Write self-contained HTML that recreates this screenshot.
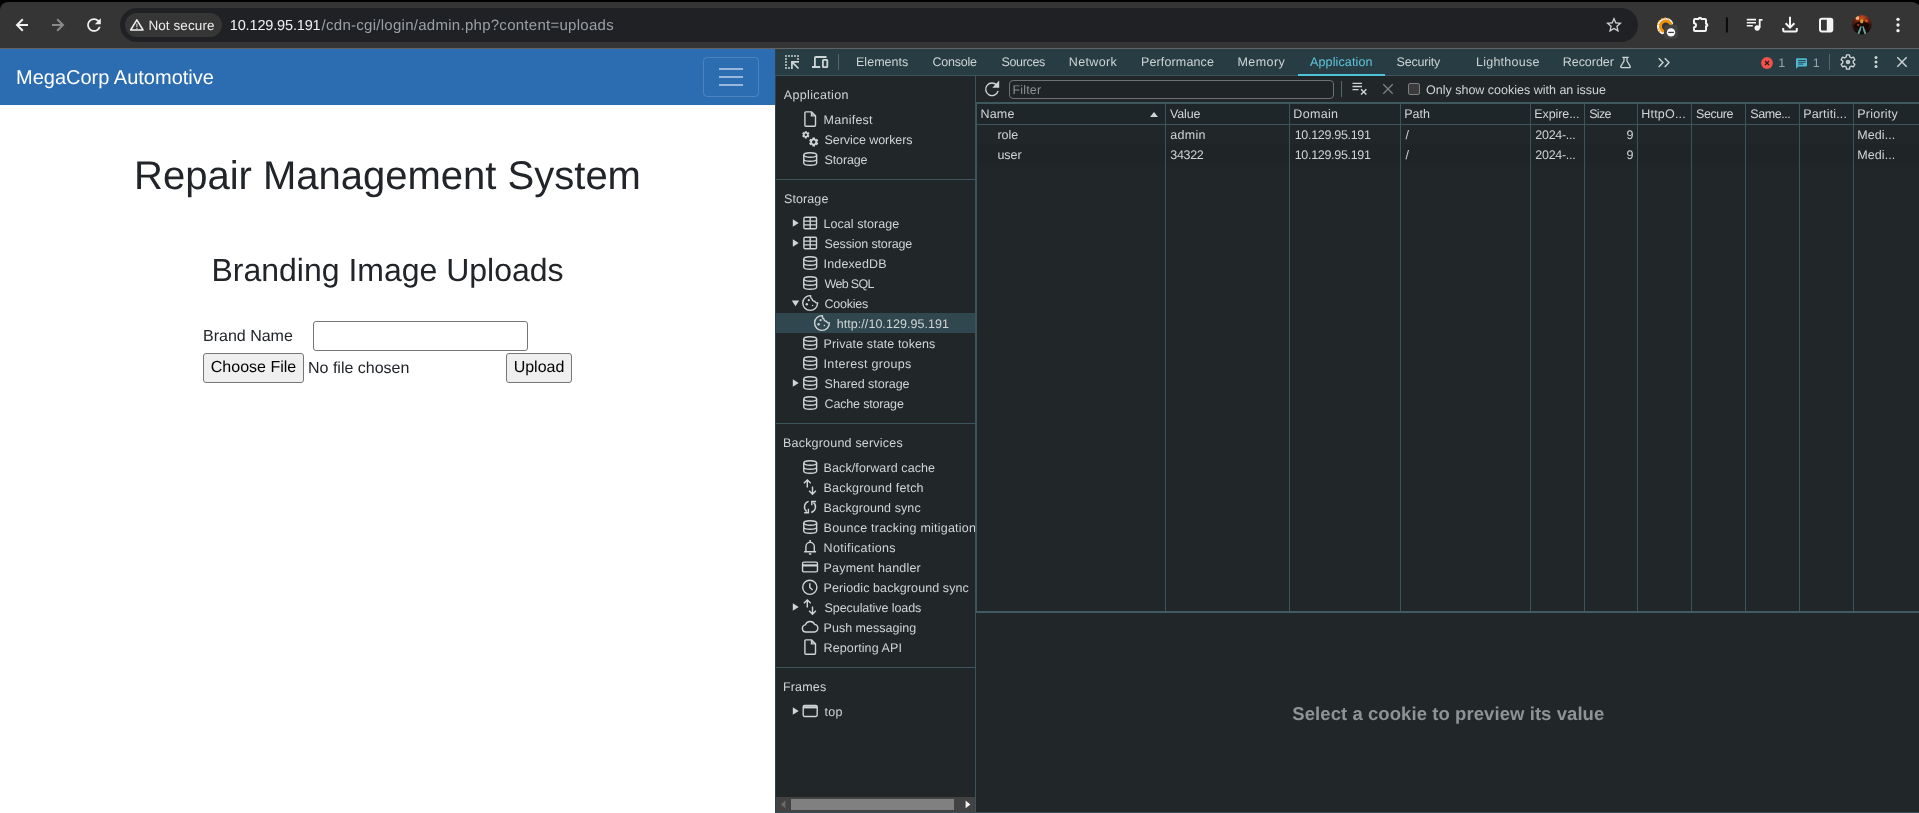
<!DOCTYPE html>
<html lang="en">
<head>
<meta charset="utf-8">
<title>Admin</title>
<style>
*{box-sizing:border-box;margin:0;padding:0}
html,body{width:1919px;height:813px;overflow:hidden;background:#fff}
body{position:relative;font-family:"Liberation Sans",sans-serif;text-rendering:geometricPrecision;-webkit-font-smoothing:antialiased}
.abs{position:absolute}
svg{position:absolute;overflow:visible}
/* ---------- browser chrome ---------- */
#chrome{will-change:transform;position:absolute;left:0;top:0;width:1919px;height:49px;background:#000;overflow:hidden}
#tb{position:absolute;left:0;top:2px;width:1920.500px;height:46px;background:#353535;border-radius:8px 9px 0 0}
#tbline{position:absolute;left:0;top:48px;width:1919px;height:1px;background:#636363}
#omni{position:absolute;left:120px;top:8px;width:1518px;height:34px;border-radius:17px;background:#202124}
#chip{position:absolute;left:125px;top:13px;width:97px;height:24px;border-radius:12px;background:#363636}
.ct{position:absolute;height:20px;line-height:20px;white-space:pre;color:#ececec}
/* ---------- page ---------- */
#page{will-change:transform;position:absolute;left:0;top:49px;width:775px;height:764px;background:#fff;color:#212529;overflow:hidden}
#nav{position:absolute;left:0;top:0;width:775px;height:56px;background:#2c6cb0}
#brand{position:absolute;left:16px;top:1px;height:56px;line-height:56px;font-size:20px;color:#fff;white-space:pre}
#tog{position:absolute;left:703px;top:8px;width:56px;height:40px;border:1px solid rgba(255,255,255,.16);border-radius:4px}
#tog i{position:absolute;left:15px;width:24px;height:2px;background:rgba(255,255,255,.52)}
h1,h2{position:absolute;left:0;width:775px;text-align:center;font-weight:400;white-space:pre}
h1{font-size:40px;line-height:48px;top:103px}
h2{font-size:32px;line-height:38px;top:201.5px}
.f16{font-size:16px;line-height:24px;white-space:pre;position:absolute}
.btn{position:absolute;height:30px;background:#efefef;border:1px solid #767676;border-radius:3px;color:#000;font-size:16px;line-height:27px;text-align:center;white-space:pre}
/* ---------- devtools ---------- */
#dt{will-change:transform;position:absolute;left:775px;top:49px;width:1144px;height:764px;background:#212629;color:#d0d4d6;font-size:12.5px;overflow:hidden}
#dt .ln{position:absolute;background:#3c555d}
#tabs{position:absolute;left:0;top:0;width:1144px;height:26px;background:#273d43}
.t{position:absolute;white-space:pre;line-height:20px;height:20px;color:#d0d4d6}
#tabs .t{top:3px;color:#c9ced0}
</style>
</head>
<body>
<div id="chrome">
 <div id="tb"></div><div id="tbline"></div>
 <div id="omni"></div><div id="chip"></div>
<div class="ct" style="left:148.40px;top:16.42px;font-size:13.5px;letter-spacing:0.092px;color:#ececec">Not secure</div>
<div class="ct" style="left:229.80px;top:15.78px;font-size:14.5px;letter-spacing:-0.155px;color:#f1f1f1">10.129.95.191</div>
<div class="ct" style="left:321.60px;top:15.60px;font-size:15px;letter-spacing:0.273px;color:#9aa0a6">/cdn-cgi/login/admin.php?content=uploads</div>
 <svg width="1919" height="48" viewBox="0 0 1919 48" style="left:0;top:0">
  <!-- back -->
  <path d="M28 25H17.6M22.8 19.2L17 25l5.8 5.8" fill="none" stroke="#f1f1f1" stroke-width="2"/>
  <!-- forward -->
  <path d="M52 25h10.4M57.2 19.2L63 25l-5.8 5.8" fill="none" stroke="#8a8a8a" stroke-width="2"/>
  <!-- reload -->
  <g transform="translate(83.8 14.8) scale(.85)" fill="#f1f1f1"><path d="M17.65 6.35C16.2 4.9 14.21 4 12 4c-4.42 0-7.99 3.58-7.99 8s3.57 8 7.99 8c3.73 0 6.84-2.55 7.73-6h-2.08c-.82 2.33-3.04 4-5.65 4-3.31 0-6-2.69-6-6s2.69-6 6-6c1.66 0 3.14.69 4.22 1.78L13 11h7V4l-2.35 2.35z"/></g>
  <!-- warning -->
  <path d="M136.850 19.900l6.200 10.100h-12.400z" fill="none" stroke="#f1f1f1" stroke-width="1.500" stroke-linejoin="round"/>
  <path d="M136.850 23.600v3.400M136.850 27.800v1.200" stroke="#b9b9b9" stroke-width="1.300"/>
  <!-- star -->
  <g transform="translate(1604.400 15.400) scale(.8)" fill="#d2d2d2"><path d="M22 9.24l-7.19-.62L12 2 9.19 8.63 2 9.24l5.46 4.73L5.82 21 12 17.27 18.18 21l-1.63-7.03L22 9.24zM12 15.4l-3.76 2.27 1-4.28-3.32-2.88 4.38-.38L12 6.1l1.71 4.04 4.38.38-3.32 2.88 1 4.28L12 15.4z"/></g>
  <!-- extension swirl -->
  <g fill="none">
   <path d="M1671.200 23.200A6.600 6.600 0 1 0 1662.300 32.300" stroke="#f6f6f6" stroke-width="3.800" stroke-linecap="round"/>
   <path d="M1670.600 23.900A5.400 5.400 0 1 0 1663 31" stroke="#f39208" stroke-width="3" stroke-linecap="round"/>
   <path d="M1669.300 19.200A7.600 7.600 0 0 0 1657.600 26.400" stroke="#f39208" stroke-width="1.300" stroke-dasharray="1.400 2.100"/>
   <path d="M1657.900 28.500A7.600 7.600 0 0 0 1661.500 32.800" stroke="#f39208" stroke-width="1.300" stroke-dasharray="1.200 1.500"/>
  </g>
  <rect x="1664.200" y="24.800" width="13.500" height="14" rx="3.200" fill="#434343"/>
  <circle cx="1671" cy="32.400" r="4.200" fill="#f8f8f8"/>
  <rect x="1668.200" y="31.800" width="5.600" height="1.200" fill="#3a3a3a"/>
  <!-- puzzle -->
  <path d="M1694 20a1 1 0 0 1 1-1h3.700a1.300 1.300 0 0 1 2.600 0h3.700a1 1 0 0 1 1 1v3.700a1.300 1.300 0 0 1 0 2.600v3.700a1 1 0 0 1-1 1h-10a1 1 0 0 1-1-1v-2.800a2 2 0 0 0 0-4z" fill="none" stroke="#f4f4f4" stroke-width="2" stroke-linejoin="round"/>
  <!-- separator -->
  <rect x="1725.900" y="17" width="2" height="15.800" rx="1" fill="#0a0a0a"/>
  <!-- queue music -->
  <path d="M1746.800 19.600h9.200M1746.800 22.700h9.200M1746.800 25.800h6" stroke="#f4f4f4" stroke-width="1.600" fill="none"/>
  <circle cx="1757.200" cy="28" r="2.700" fill="#f4f4f4"/>
  <path d="M1759.700 28v-8.100h2.800" stroke="#f4f4f4" stroke-width="1.800" fill="none"/>
  <!-- download -->
  <path d="M1790 16.800v10.400M1785.600 23.300l4.400 4.400 4.400-4.400" stroke="#f4f4f4" stroke-width="2" fill="none"/>
  <path d="M1783.200 28v2.500a1 1 0 0 0 1 1h11.600a1 1 0 0 0 1-1v-2.500" stroke="#f4f4f4" stroke-width="2" fill="none"/>
  <!-- side panel -->
  <rect x="1820" y="18.800" width="12.300" height="12.600" rx="1.800" fill="none" stroke="#f4f4f4" stroke-width="2"/>
  <rect x="1826.800" y="18.800" width="5.500" height="12.600" fill="#f4f4f4"/>
  <!-- avatar -->
  <defs>
   <clipPath id="avc"><circle cx="1861.900" cy="24.800" r="9.700"/></clipPath>
   <radialGradient id="avg" cx="50%" cy="18%" r="62%"><stop offset="0" stop-color="#c8501c"/><stop offset=".45" stop-color="#7a2410"/><stop offset="1" stop-color="#150b09"/></radialGradient>
  </defs>
  <g clip-path="url(#avc)">
   <rect x="1851" y="14" width="22" height="22" fill="url(#avg)"/>
   <ellipse cx="1861.900" cy="25.500" rx="7.500" ry="4.200" fill="#0d0605" opacity=".85"/>
   <circle cx="1857.400" cy="18" r="1.900" fill="#f6c48c" opacity=".9"/>
   <rect x="1860.200" y="19.200" width="3" height="4" rx="1" fill="#e0a23a" opacity=".9"/>
   <circle cx="1866.500" cy="21" r="1.400" fill="#d96a22" opacity=".8"/>
   <circle cx="1858.200" cy="25" r="1.200" fill="#c04a1a" opacity=".7"/>
   <path d="M1861.300 26.500l-3.300 8.200M1862.700 26.500l3.100 8.200" stroke="#69a39c" stroke-width="1.900" fill="none"/>
   <path d="M1862 27.500v7.500" stroke="#0b1416" stroke-width="1.600"/>
  </g>
  <!-- kebab -->
  <circle cx="1898" cy="19.300" r="1.650" fill="#f4f4f4"/><circle cx="1898" cy="25" r="1.650" fill="#f4f4f4"/><circle cx="1898" cy="30.700" r="1.650" fill="#f4f4f4"/>
 </svg>
</div>

<div id="page">
 <div id="nav">
  <div id="brand">MegaCorp Automotive</div>
  <div id="tog"><i style="top:10px"></i><i style="top:18px"></i><i style="top:26px"></i></div>
 </div>
 <h1>Repair Management System</h1>
 <h2>Branding Image Uploads</h2>
 <div class="f16" style="left:203px;top:276px">Brand Name</div>
 <div class="abs" style="left:313px;top:272px;width:215px;height:30px;border:1px solid #767676;border-radius:3px;background:#fff"></div>
 <div class="btn" style="left:203px;top:304px;width:101px">Choose File</div>
 <div class="f16" style="left:308px;top:307.5px">No file chosen</div>
 <div class="btn" style="left:506px;top:304px;width:66px">Upload</div>
</div>

<div id="dt">
<div id="tabs"></div>
<div class="abs" style="left:202px;top:55px;width:942px;height:20px;background:#1e2629"></div>
<div class="abs" style="left:202px;top:95px;width:942px;height:20px;background:#1f2427"></div>
<div class="abs" style="left:1px;top:264px;width:199px;height:20px;background:#30474f"></div>
<div class="ln" style="left:0px;top:0px;width:1px;height:764px;background:#2b4249"></div>
<div class="ln" style="left:0px;top:26px;width:1144px;height:1px;"></div>
<div class="ln" style="left:201px;top:53px;width:943px;height:2px;background:#3f5860"></div>
<div class="ln" style="left:200px;top:27px;width:1px;height:737px;"></div>
<div class="ln" style="left:201px;top:54px;width:1px;height:509px;"></div>
<div class="ln" style="left:1px;top:130px;width:199px;height:1px;"></div>
<div class="ln" style="left:1px;top:374px;width:199px;height:1px;"></div>
<div class="ln" style="left:1px;top:618px;width:199px;height:1px;"></div>
<div class="ln" style="left:202px;top:75px;width:942px;height:1px;"></div>
<div class="ln" style="left:390px;top:55px;width:1px;height:507px;"></div>
<div class="ln" style="left:514px;top:55px;width:1px;height:507px;"></div>
<div class="ln" style="left:625px;top:55px;width:1px;height:507px;"></div>
<div class="ln" style="left:755px;top:55px;width:1px;height:507px;"></div>
<div class="ln" style="left:809px;top:55px;width:1px;height:507px;"></div>
<div class="ln" style="left:862px;top:55px;width:1px;height:507px;"></div>
<div class="ln" style="left:916px;top:55px;width:1px;height:507px;"></div>
<div class="ln" style="left:970px;top:55px;width:1px;height:507px;"></div>
<div class="ln" style="left:1024px;top:55px;width:1px;height:507px;"></div>
<div class="ln" style="left:1078px;top:55px;width:1px;height:507px;"></div>
<div class="ln" style="left:201px;top:562px;width:943px;height:2px;background:#425a62"></div>
<div class="ln" style="left:0px;top:763px;width:1144px;height:1px;background:#35505a"></div>
<div class="abs" style="left:523px;top:25px;width:87px;height:2px;background:#4fc1d8"></div>
<div class="abs" style="left:234px;top:31px;width:325px;height:19px;border:1px solid #6d7375;border-radius:4px;background:#1f2427"></div>
<div class="abs" style="left:633px;top:34px;width:12px;height:12px;border:1px solid #7b7f81;border-radius:2px;background:#3b3b3b"></div>
<div class="abs" style="left:1px;top:748px;width:199px;height:15px;background:#424242"></div>
<div class="abs" style="left:16px;top:750px;width:163px;height:11px;background:#808080"></div>
<div class="t" style="left:81.00px;top:3px;letter-spacing:0.021px;color:#cdd2d4">Elements</div>
<div class="t" style="left:157.50px;top:3px;letter-spacing:-0.235px;color:#cdd2d4">Console</div>
<div class="t" style="left:226.50px;top:3px;letter-spacing:-0.351px;color:#cdd2d4">Sources</div>
<div class="t" style="left:293.75px;top:3px;letter-spacing:0.359px;color:#cdd2d4">Network</div>
<div class="t" style="left:366.00px;top:3px;letter-spacing:0.139px;color:#cdd2d4">Performance</div>
<div class="t" style="left:462.50px;top:3px;letter-spacing:0.442px;color:#cdd2d4">Memory</div>
<div class="t" style="left:535.00px;top:3px;letter-spacing:0.130px;color:#5fc7dd">Application</div>
<div class="t" style="left:621.50px;top:3px;letter-spacing:-0.201px;color:#cdd2d4">Security</div>
<div class="t" style="left:701.00px;top:3px;letter-spacing:0.243px;color:#cdd2d4">Lighthouse</div>
<div class="t" style="left:787.75px;top:3px;letter-spacing:-0.035px;color:#cdd2d4">Recorder</div>
<div class="t" style="left:1003.30px;top:4px;color:#9aa3a6">1</div>
<div class="t" style="left:1037.80px;top:4px;color:#9aa3a6">1</div>
<div class="t" style="left:237.50px;top:30.5px;letter-spacing:0.177px;color:#8b9092">Filter</div>
<div class="t" style="left:651.00px;top:30.5px;">Only show cookies with an issue</div>
<div class="t" style="left:8.85px;top:36px;letter-spacing:0.345px;">Application</div>
<div class="t" style="left:9.00px;top:140px;letter-spacing:0.095px;">Storage</div>
<div class="t" style="left:8.00px;top:384px;letter-spacing:0.201px;">Background services</div>
<div class="t" style="left:8.00px;top:628px;letter-spacing:0.157px;">Frames</div>
<div class="t" style="left:48.60px;top:61px;letter-spacing:0.247px;">Manifest</div>
<div class="t" style="left:49.60px;top:81px;letter-spacing:-0.069px;">Service workers</div>
<div class="t" style="left:49.60px;top:101px;letter-spacing:-0.155px;">Storage</div>
<div class="t" style="left:48.60px;top:165px;letter-spacing:0.042px;">Local storage</div>
<div class="t" style="left:49.60px;top:185px;letter-spacing:-0.142px;">Session storage</div>
<div class="t" style="left:48.60px;top:205px;letter-spacing:0.136px;">IndexedDB</div>
<div class="t" style="left:49.60px;top:225px;letter-spacing:-0.700px;">Web SQL</div>
<div class="t" style="left:49.60px;top:245px;letter-spacing:-0.252px;">Cookies</div>
<div class="t" style="left:48.60px;top:285px;letter-spacing:0.104px;">Private state tokens</div>
<div class="t" style="left:48.60px;top:305px;letter-spacing:0.305px;">Interest groups</div>
<div class="t" style="left:49.60px;top:325px;letter-spacing:-0.040px;">Shared storage</div>
<div class="t" style="left:49.60px;top:345px;letter-spacing:-0.171px;">Cache storage</div>
<div class="t" style="left:48.60px;top:409px;letter-spacing:0.099px;">Back/forward cache</div>
<div class="t" style="left:48.60px;top:429px;letter-spacing:0.178px;">Background fetch</div>
<div class="t" style="left:48.60px;top:449px;letter-spacing:0.083px;">Background sync</div>
<div class="t" style="left:48.60px;top:469px;letter-spacing:0.230px;max-width:151.4px;overflow:hidden">Bounce tracking mitigation</div>
<div class="t" style="left:48.60px;top:489px;letter-spacing:0.322px;">Notifications</div>
<div class="t" style="left:48.60px;top:509px;letter-spacing:0.190px;">Payment handler</div>
<div class="t" style="left:48.60px;top:529px;letter-spacing:0.092px;">Periodic background sync</div>
<div class="t" style="left:49.60px;top:549px;letter-spacing:-0.077px;">Speculative loads</div>
<div class="t" style="left:48.60px;top:569px;letter-spacing:0.011px;">Push messaging</div>
<div class="t" style="left:48.60px;top:589px;letter-spacing:0.104px;">Reporting API</div>
<div class="t" style="left:49.60px;top:653px;letter-spacing:0.188px;">top</div>
<div class="t" style="left:61.80px;top:265px;letter-spacing:0.045px;">http://10.129.95.191</div>
<div class="t" style="left:205.50px;top:55px;letter-spacing:0.169px;">Name</div>
<div class="t" style="left:395.00px;top:55px;letter-spacing:-0.148px;">Value</div>
<div class="t" style="left:518.30px;top:55px;letter-spacing:0.316px;">Domain</div>
<div class="t" style="left:629.20px;top:55px;letter-spacing:0.013px;">Path</div>
<div class="t" style="left:759.30px;top:55px;letter-spacing:-0.085px;">Expire...</div>
<div class="t" style="left:814.20px;top:55px;letter-spacing:-0.700px;">Size</div>
<div class="t" style="left:866.30px;top:55px;letter-spacing:0.194px;">HttpO...</div>
<div class="t" style="left:921.00px;top:55px;letter-spacing:-0.431px;">Secure</div>
<div class="t" style="left:975.25px;top:55px;letter-spacing:-0.433px;">Same...</div>
<div class="t" style="left:1028.20px;top:55px;letter-spacing:0.156px;">Partiti...</div>
<div class="t" style="left:1082.30px;top:55px;letter-spacing:0.223px;">Priority</div>
<div class="t" style="left:222.40px;top:76px;letter-spacing:-0.014px;">role</div>
<div class="t" style="left:395.30px;top:76px;letter-spacing:0.277px;">admin</div>
<div class="t" style="left:519.70px;top:76px;letter-spacing:-0.307px;">10.129.95.191</div>
<div class="t" style="left:630.60px;top:76px;">/</div>
<div class="t" style="left:760.30px;top:76px;letter-spacing:-0.281px;">2024-...</div>
<div class="t" style="left:1082.30px;top:76px;letter-spacing:0.068px;">Medi...</div>
<div class="t" style="left:851.60px;top:76px;">9</div>
<div class="t" style="left:222.40px;top:96px;letter-spacing:-0.018px;">user</div>
<div class="t" style="left:395.30px;top:96px;letter-spacing:-0.339px;">34322</div>
<div class="t" style="left:519.70px;top:96px;letter-spacing:-0.307px;">10.129.95.191</div>
<div class="t" style="left:630.60px;top:96px;">/</div>
<div class="t" style="left:760.30px;top:96px;letter-spacing:-0.281px;">2024-...</div>
<div class="t" style="left:1082.30px;top:96px;letter-spacing:0.068px;">Medi...</div>
<div class="t" style="left:851.60px;top:96px;">9</div>
<div class="t" style="left:517.30px;top:652.6px;letter-spacing:0.071px;color:#8e9496;font-weight:700;font-size:18.5px;line-height:24px;height:24px">Select a cookie to preview its value</div>
<svg width="1144" height="764" viewBox="775 49 1144 764" style="left:0;top:0">
<defs>
<g id="i-doc" fill="none" stroke="#cfd4d6" stroke-width="1.4"><path d="M3.600.9h5.800l3.900 3.900v9.500a.9.9 0 0 1-.9.9H3.600a.9.9 0 0 1-.9-.9V1.800a.9.9 0 0 1 .9-.9z"/><path d="M9.200 1v4h4" stroke-width="1.200"/><path d="M9.600 1.300l3.400 3.400H9.600z" fill="#cfd4d6" stroke="none" opacity=".75"/></g>
<g id="i-db" fill="none" stroke="#cfd4d6" stroke-width="1.400"><ellipse cx="8" cy="4" rx="6.450" ry="2.300"/><path d="M1.550 4v8a6.450 2.300 0 0 0 12.900 0V4M1.550 8a6.450 2.300 0 0 0 12.900 0"/></g>
<g id="i-tbl" fill="none" stroke="#cfd4d6" stroke-width="1.400"><rect x="1.700" y="2.200" width="12.600" height="11.600" rx="1.400"/><path d="M8 2.200v11.600M1.700 6.100h12.600M1.700 9.900h12.600"/></g>
<g id="i-cookie"><path d="M8.400.600A7.400 7.400 0 1 0 15.400 7.800C14.200 8.200 12.900 7.500 12.600 6.300 11.200 6.500 10 5.500 10 4.200 8.900 3.700 8.200 2.400 8.400.600z" fill="none" stroke="#cfd4d6" stroke-width="1.400" stroke-linejoin="round"/><circle cx="6.600" cy="5.200" r="1.100" fill="#cfd4d6"/><circle cx="4.600" cy="9.300" r="1.200" fill="#cfd4d6"/><circle cx="10.400" cy="10.500" r=".800" fill="#cfd4d6"/></g>
<g id="i-updown" fill="none" stroke="#cfd4d6" stroke-width="1.400"><path d="M5.100 8.600V1M1.700 4.300L5.100.9l3.400 3.400M10.300 7.400v7.700M6.900 11.800l3.400 3.400 3.400-3.400"/></g>
<g id="i-sync" fill="none" stroke="#cfd4d6" stroke-width="1.400"><path d="M6.400 2.400A5.800 5.800 0 0 0 4.600 12.600M9 13.500A5.800 5.800 0 0 0 11.300 3.500"/><path d="M2 13.700h4.200v-3.900M13.900 2.500H9.600v3.700" stroke-width="1.400"/></g>
<g id="i-bell" fill="none" stroke="#cfd4d6" stroke-width="1.400"><path d="M1.900 12.700h12M3.700 12.500V7.600a4.200 4.200 0 0 1 8.400 0v4.900"/><path d="M7.900 3.400V1" stroke-width="1.600"/><path d="M6.700 14.900h2.400" stroke-width="1.500"/></g>
<g id="i-card" fill="none" stroke="#cfd4d6" stroke-width="1.400"><rect x=".350" y="3.100" width="14.900" height="9.800" rx="1.400"/><path d="M.350 6.400h14.900" stroke-width="2.200"/></g>
<g id="i-clock" fill="none" stroke="#cfd4d6" stroke-width="1.400"><circle cx="7.600" cy="8.300" r="7.100"/><path d="M7.600 4.200v4.200l2.800 2.600"/></g>
<g id="i-cloud" fill="none" stroke="#cfd4d6" stroke-width="1.400"><path d="M3.700 13a3.600 3.600 0 0 1-.5-7.150 5 5 0 0 1 9.300-.45 3.850 3.850 0 0 1-.3 7.600z" stroke-linejoin="round"/></g>
<g id="i-frame" fill="none" stroke="#cfd4d6" stroke-width="1.400"><rect x="1" y="2.500" width="14" height="11" rx="1.400"/><path d="M1 4.300h14" stroke-width="2.200"/></g>
<g id="i-gears"><path d="M4.76 1.31L4.58 0.13L2.62 0.13L2.44 1.31L2.02 1.55L0.91 1.11L-0.07 2.82L0.86 3.56L0.86 4.04L-0.07 4.78L0.91 6.49L2.02 6.05L2.44 6.29L2.62 7.47L4.58 7.47L4.76 6.29L5.18 6.05L6.29 6.49L7.27 4.78L6.34 4.04L6.34 3.56L7.27 2.82L6.29 1.11L5.18 1.55zM2.40 3.80a1.2 1.2 0 1 0 2.4 0a1.2 1.2 0 1 0 -2.4 0zM12.96 7.87L12.73 6.41L10.27 6.41L10.04 7.87L9.52 8.17L8.14 7.64L6.91 9.77L8.06 10.70L8.06 11.30L6.91 12.23L8.14 14.36L9.52 13.83L10.04 14.13L10.27 15.59L12.73 15.59L12.96 14.13L13.48 13.83L14.86 14.36L16.09 12.23L14.94 11.30L14.94 10.70L16.09 9.77L14.86 7.64L13.48 8.17zM9.80 11.00a1.7 1.7 0 1 0 3.4 0a1.7 1.7 0 1 0 -3.4 0z" fill="#cfd4d6" fill-rule="evenodd"/></g>
</defs>
<use href="#i-doc" x="802.2" y="111"/>
<use href="#i-gears" x="802.2" y="131"/>
<use href="#i-db" x="802.2" y="151"/>
<use href="#i-tbl" x="802.2" y="215"/>
<use href="#i-tbl" x="802.2" y="235"/>
<use href="#i-db" x="802.2" y="255"/>
<use href="#i-db" x="802.2" y="275"/>
<use href="#i-cookie" x="802.2" y="295"/>
<use href="#i-db" x="802.2" y="335"/>
<use href="#i-db" x="802.2" y="355"/>
<use href="#i-db" x="802.2" y="375"/>
<use href="#i-db" x="802.2" y="395"/>
<use href="#i-db" x="802.2" y="459"/>
<use href="#i-updown" x="802.2" y="479"/>
<use href="#i-sync" x="802.2" y="499"/>
<use href="#i-db" x="802.2" y="519"/>
<use href="#i-bell" x="802.2" y="539"/>
<use href="#i-card" x="802.2" y="559"/>
<use href="#i-clock" x="802.2" y="579"/>
<use href="#i-updown" x="802.2" y="599"/>
<use href="#i-cloud" x="802.2" y="619"/>
<use href="#i-doc" x="802.2" y="639"/>
<use href="#i-frame" x="802.2" y="703"/>
<use href="#i-cookie" x="814" y="315"/>
<path d="M792.800 219.3l5.900 3.700-5.900 3.700z" fill="#cfd4d6"/>
<path d="M792.800 239.3l5.900 3.700-5.900 3.700z" fill="#cfd4d6"/>
<path d="M792.800 379.3l5.900 3.700-5.900 3.700z" fill="#cfd4d6"/>
<path d="M792.800 603.3l5.900 3.700-5.900 3.700z" fill="#cfd4d6"/>
<path d="M792.800 707.3l5.900 3.700-5.900 3.700z" fill="#cfd4d6"/>
<path d="M791.800 300.400h7.400l-3.700 5.900z" fill="#cfd4d6"/>
<path d="M785.400 800.600v7.600l-4.600-3.800z" fill="#6b6b6b"/><path d="M965.600 800.600v7.600l4.800-3.800z" fill="#f4f4f4"/>
<path d="M1150 117h8l-4-5.100z" fill="#cfd4d6"/>
<path d="M785 55h2v2h-2zM788 55h2v2h-2zM791 55h2v2h-2zM794 55h2v2h-2zM797 55h2v2h-2zM785 58h2v2h-2zM785 61h2v2h-2zM785 64h2v2h-2zM785 67h2v2h-2zM797 58h2v2h-2zM788 67h2v2h-2z" fill="#cfd4d6" opacity=".72"/>
<path d="M799 61.900h-7.100V69M792.200 62.200l6.300 6.300" fill="none" stroke="#cfd4d6" stroke-width="1.700"/>
<path d="M826.500 57h-10.600a1 1 0 0 0-1 1v8.200M812 67h8.200" fill="none" stroke="#cfd4d6" stroke-width="1.800"/>
<rect x="822.900" y="59.900" width="4.400" height="7.300" rx=".6" fill="none" stroke="#cfd4d6" stroke-width="1.800"/>
<rect x="838" y="54" width="1" height="16" fill="#56676c"/>
<path d="M1622.300 57.300h6.400M1624 57.400v3.600l-3.200 5.400a.8.800 0 0 0 .7 1.200h8a.8.800 0 0 0 .7-1.200l-3.200-5.400v-3.600" fill="none" stroke="#cfd4d6" stroke-width="1.300" stroke-linejoin="round"/>
<path d="M1658.700 58.200l4.300 4.400-4.300 4.400M1664.700 58.200l4.300 4.400-4.300 4.400" fill="none" stroke="#cfd4d6" stroke-width="1.400"/>
<circle cx="1767" cy="63" r="5.900" fill="#f1534c"/><path d="M1765 61l4 4M1769 61l-4 4" stroke="#2a1a1a" stroke-width="1.300"/>
<path d="M1797 58.200h9a1 1 0 0 1 1 1v6.200a1 1 0 0 1-1 1h-7.600l-2.400 2.300v-9.500a1 1 0 0 1 1-1z" fill="#4db8d0"/><path d="M1798.200 60.500h7.600M1798.200 62.300h7.600M1798.200 64.100h5.200" stroke="#273d43" stroke-width=".9"/>
<rect x="1829" y="54" width="1" height="16" fill="#56676c"/>
<path d="M1849.74 56.94 L1849.51 54.91 L1846.49 54.91 L1846.26 56.94 L1844.49 57.96 L1842.61 57.15 L1841.10 59.76 L1842.75 60.98 L1842.75 63.02 L1841.10 64.24 L1842.61 66.85 L1844.49 66.04 L1846.26 67.06 L1846.49 69.09 L1849.51 69.09 L1849.74 67.06 L1851.51 66.04 L1853.39 66.85 L1854.90 64.24 L1853.25 63.02 L1853.25 60.98 L1854.90 59.76 L1853.39 57.15 L1851.51 57.96z" fill="none" stroke="#cfd4d6" stroke-width="1.350" stroke-linejoin="round"/><circle cx="1848" cy="62" r="2.300" fill="#cfd4d6" opacity=".9"/>
<circle cx="1876" cy="57.4" r="1.500" fill="#cfd4d6"/>
<circle cx="1876" cy="62" r="1.500" fill="#cfd4d6"/>
<circle cx="1876" cy="66.6" r="1.500" fill="#cfd4d6"/>
<path d="M1897.300 57.300l9.400 9.400M1906.700 57.300l-9.400 9.400" stroke="#cfd4d6" stroke-width="1.400"/>
<path d="M997.160 85.690A6.300 6.300 0 1 0 998.090 90.930" fill="none" stroke="#cfd4d6" stroke-width="1.400"/><path d="M998.500 82.200v4.900h-4.600z" fill="#cfd4d6" stroke="#cfd4d6" stroke-width="1.400" stroke-linejoin="miter"/>
<rect x="1341" y="81" width="1" height="16" fill="#56676c"/>
<path d="M1352.500 83.300h9.500M1352.500 86.500h9.500M1352.500 89.700h6" stroke="#cfd4d6" stroke-width="1.300"/><path d="M1361 89.200l5.400 5.400M1366.400 89.200l-5.400 5.400" stroke="#cfd4d6" stroke-width="1.400"/>
<path d="M1383.300 84.300l9.400 9.400M1392.700 84.300l-9.400 9.400" stroke="#7d8385" stroke-width="1.300"/>
</svg>
</div>
</body>
</html>
